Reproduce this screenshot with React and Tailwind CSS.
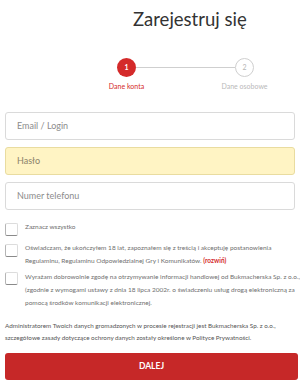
import React from "react";

function Box() {
    return (
        <span className="mt-[1px] block h-[13px] w-[13px] shrink-0 rounded-[2px] border border-[#dcdcdc] border-b-[#8a8a8a] border-l-[#b5b5b5] bg-white" />
    );
}

function Field({ label, yellow }) {
    return (
        <div
            className={`flex h-[28px] items-center rounded-[3px] border pl-[11px] text-[9px] ${
                yellow ? "border-[#e9dca0] bg-[#fff4c4] text-[#8a826a]" : "border-[#dadada] bg-white text-[#8c8c8c]"
            }`}
        >
            {label}
        </div>
    );
}

export default function App() {
    return (
        <div className="h-[383px] w-[300px] overflow-hidden bg-white font-['Lato','Open_Sans',sans-serif] text-[#555]">
            {/* Title */}
            <h1 className="pl-[133px] pt-[8px] text-[18.5px] leading-[22px] font-normal text-[#333]">Zarejestruj się</h1>

            {/* Stepper */}
            <div className="ml-[117px] mt-[28px] flex items-start">
                <div className="flex w-[19px] flex-col items-center">
                    <div className="flex h-[19px] w-[19px] items-center justify-center rounded-full bg-[#d42a2a] text-[7px] font-bold text-white">1</div>
                    <span className="mt-[5px] whitespace-nowrap text-[7px] leading-[9px] text-[#d42a2a]">Dane konta</span>
                </div>
                <div className="mt-[9px] h-px w-[99px] bg-[#cfcfcf]" />
                <div className="flex w-[19px] flex-col items-center">
                    <div className="flex h-[19px] w-[19px] items-center justify-center rounded-full border border-[#cfcfcf] bg-white text-[7px] text-[#b5b5b5]">2</div>
                    <span className="mt-[5px] whitespace-nowrap text-[7px] leading-[9px] text-[#b9b9b9]">Dane osobowe</span>
                </div>
            </div>

            {/* Inputs */}
            <div className="mx-[5px] mt-[21px] flex flex-col gap-[7px]">
                <Field label="Email / Login" />
                <Field label="Hasło" yellow />
                <Field label="Numer telefonu" />
            </div>

            {/* Consents */}
            <div className="mx-[5px] mt-[12px] flex flex-col text-[6.5px] leading-[12.5px] text-[#707070]">
                <label className="flex gap-[7px]">
                    <Box />
                    <span className="mt-[-1px]">Zaznacz wszystko</span>
                </label>
                <label className="mt-[7px] flex gap-[7px]">
                    <Box />
                    <span className="mt-[-1px] whitespace-nowrap">
                        Oświadczam, że ukończyłem 18 lat, zapoznałem się z treścią i akceptuję postanowienia
                        <br />
                        Regulaminu, Regulaminu Odpowiedzialnej Gry i Komunikatów.{" "}
                        <span className="font-bold text-[#d42a2a]">(rozwiń)</span>
                    </span>
                </label>
                <label className="mt-[4px] flex gap-[7px]">
                    <Box />
                    <span className="mt-[-1px] whitespace-nowrap leading-[13px]">
                        Wyrażam dobrowolnie zgodę na otrzymywanie informacji handlowej od Bukmacherska Sp. z o.o.,
                        <br />
                        (zgodnie z wymogami ustawy z dnia 18 lipca 2002r. o świadczeniu usług drogą elektroniczną za
                        <br />
                        pomocą środków komunikacji elektronicznej.
                    </span>
                </label>
            </div>

            <p className="mx-[5px] mt-[11px] whitespace-nowrap text-[6.3px] leading-[11.5px] text-[#555]">
                Administratorem Twoich danych gromadzonych w procesie rejestracji jest Bukmacherska Sp. z o.o.,
                <br />
                szczegółowe zasady dotyczące ochrony danych zostały określone w Polityce Prywatności.
            </p>

            <button className="mx-[5px] mt-[10px] flex h-[27px] w-[293px] items-center justify-center rounded-[3px] bg-[#c62828] text-[8.5px] font-bold text-white">
                DALEJ
            </button>
        </div>
    );
}
